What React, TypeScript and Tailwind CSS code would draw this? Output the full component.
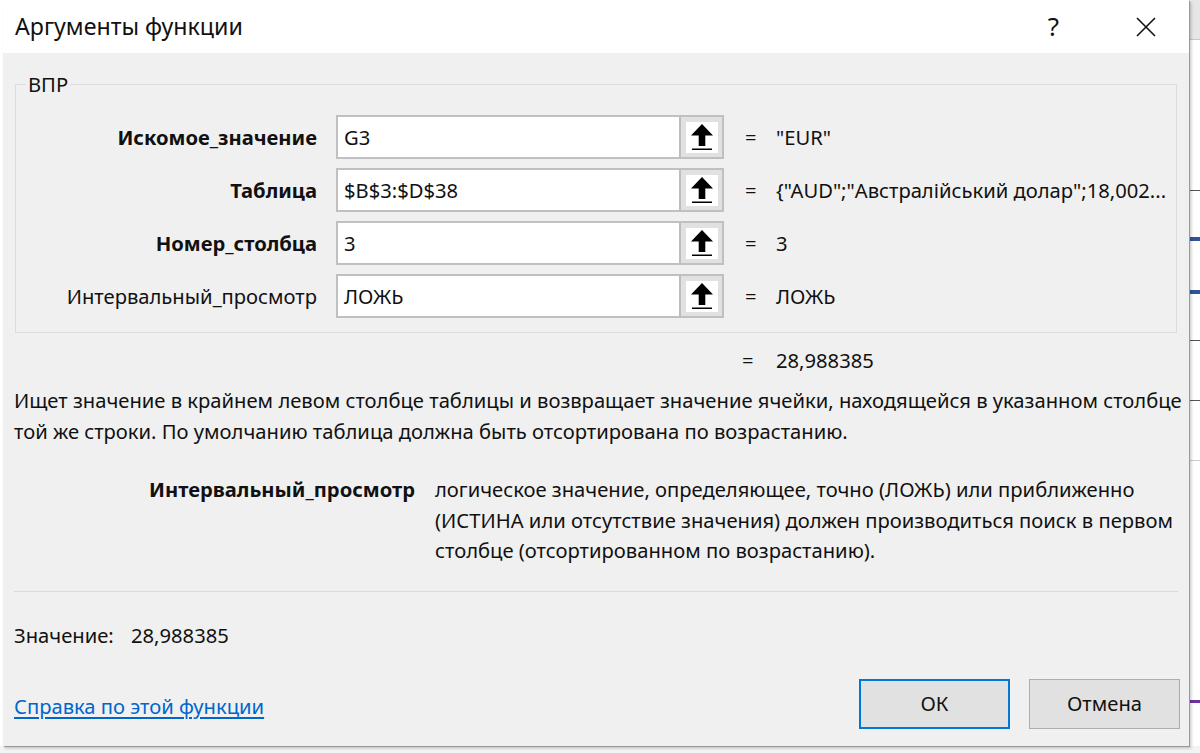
import React from "react";

const font = { fontFamily: '"Noto Sans", "Open Sans", sans-serif' };

const args = [
  { label: "Искомое_значение", value: "G3", result: '"EUR"', bold: true },
  { label: "Таблица", value: "$B$3:$D$38", result: '{"AUD";"Австралійський долар";18,002...', bold: true },
  { label: "Номер_столбца", value: "3", result: "3", bold: true },
  { label: "Интервальный_просмотр", value: "ЛОЖЬ", result: "ЛОЖЬ", bold: false },
];

function RefButton() {
  return (
    <div className="flex h-full w-[43px] items-center justify-center border-l-2 border-[#bdbdbd] bg-[#e1e1e1]">
      <div className="flex h-[31px] w-[32px] items-center justify-center bg-white">
        <svg width="26" height="28" viewBox="0 0 26 28">
          <path d="M13 1 L24 12.5 L16.3 12.5 L16.3 23 L9.7 23 L9.7 12.5 L2 12.5 Z" fill="#000" />
          <rect x="3" y="25.5" width="20" height="1.5" fill="#000" />
        </svg>
      </div>
    </div>
  );
}

function ArgRow({ label, value, result, bold }: (typeof args)[number]) {
  return (
    <div className="flex h-[44px] items-center">
      <div
        className={`w-[302px] pr-[1px] text-right text-[20.2px] whitespace-nowrap text-[#111] ${bold ? "font-bold" : ""}`}
      >
        {label}
      </div>
      <div className="ml-[18px] flex h-[44px] w-[388px] border-2 border-[#c0c0c0] bg-white">
        <div className="flex flex-1 items-center pl-[6px] text-[20.2px] text-[#111]">{value}</div>
        <RefButton />
      </div>
      <div className="ml-[21px] w-[31px] text-[20.2px] text-[#111]">=</div>
      <div className="text-[20.2px] text-[#111] whitespace-nowrap">{result}</div>
    </div>
  );
}

export default function App() {
  return (
    <div className="relative h-[753px] w-[1200px] overflow-hidden bg-white" style={font}>
      {/* spreadsheet peeking from behind the dialog */}
      <div className="absolute right-0 top-0 h-[40px] w-[12px] bg-[#e6e6e6] border-b border-[#c8c8c8]" />
      <div className="absolute right-0 top-[190px] h-px w-[12px] bg-[#555]" />
      <div className="absolute right-0 top-[237px] h-[4px] w-[10px] bg-[#2f5597]" />
      <div className="absolute right-0 top-[290px] h-[4px] w-[10px] bg-[#2f5597]" />
      <div className="absolute right-0 top-[340px] h-px w-[12px] bg-[#555]" />
      <div className="absolute right-0 top-[400px] h-px w-[12px] bg-[#555]" />
      <div className="absolute right-0 top-[460px] h-px w-[12px] bg-[#ccc]" />
      <div className="absolute right-0 top-[700px] h-[3px] w-[12px] bg-[#7030a0]" />
      <div className="absolute bottom-0 left-0 h-[7px] w-full bg-[#f3f3f3]" />

      <div className="relative ml-[3px] flex h-[746px] w-[1186px] flex-col bg-[#f0f0f0] shadow-[1px_1px_0_#9a9a9a,2px_2px_3px_rgba(0,0,0,0.25)]">
        {/* title bar */}
        <div className="flex h-[53px] items-center bg-white pl-[12px]">
          <div className="text-[23.2px] text-[#111]">Аргументы функции</div>
          <div className="ml-auto mr-[76px] text-[26px] text-[#111]">?</div>
          <svg className="mr-[32px]" width="22" height="22" viewBox="0 0 22 22">
            <path d="M2 2 L20 20 M20 2 L2 20" stroke="#111" strokeWidth="1.6" />
          </svg>
        </div>

        {/* group box */}
        <fieldset className="mx-[12px] mt-[16px] h-[264px] border border-[#dcdcdc] px-0 pb-[12px] pt-[16px]">
          <legend className="ml-[10px] px-[2px] text-[20.2px] text-[#111]">ВПР</legend>
          <div className="flex flex-col gap-[9px]">
            {args.map((a) => (
              <ArgRow key={a.label} {...a} />
            ))}
          </div>
        </fieldset>

        <div className="mt-[12px] flex h-[30px] items-center pl-[739px] text-[20.2px] text-[#111]">
          <span className="w-[34px]">=</span>
          <span>28,988385</span>
        </div>

        <div className="mt-[10px] px-[11px] text-[20.2px] leading-[31px] whitespace-nowrap text-[#111]">
          Ищет значение в крайнем левом столбце таблицы и возвращает значение ячейки, находящейся в указанном столбце
          <br />
          той же строки. По умолчанию таблица должна быть отсортирована по возрастанию.
        </div>

        <div className="mt-[27px] flex text-[20.2px] leading-[30.5px] text-[#111]">
          <div className="w-[412px] text-right font-bold">Интервальный_просмотр</div>
          <div className="ml-[20px] whitespace-nowrap">
            логическое значение, определяющее, точно (ЛОЖЬ) или приближенно
            <br />
            (ИСТИНА или отсутствие значения) должен производиться поиск в первом
            <br />
            столбце (отсортированном по возрастанию).
          </div>
        </div>

        <div className="mx-[11px] mt-[25px] h-px bg-[#dadada]" />

        <div className="mt-[29px] flex h-[30px] items-center pl-[11px] text-[20.2px] text-[#111]">
          <span className="w-[117px]">Значение:</span>
          <span>28,988385</span>
        </div>

        <div className="mt-[28px] flex items-center pl-[11px] pr-[9px]">
          <a href="#" className="pt-[6px] text-[20.2px] text-[#0066cc] underline underline-offset-[3px]">
            Справка по этой функции
          </a>
          <button className="ml-auto h-[50px] w-[151px] border-2 border-[#0078d7] bg-[#e1e1e1] text-[20.2px] text-[#111]">
            ОК
          </button>
          <button className="ml-[19px] h-[50px] w-[151px] border border-[#adadad] bg-[#e1e1e1] text-[20.2px] text-[#111]">
            Отмена
          </button>
        </div>
      </div>
    </div>
  );
}
